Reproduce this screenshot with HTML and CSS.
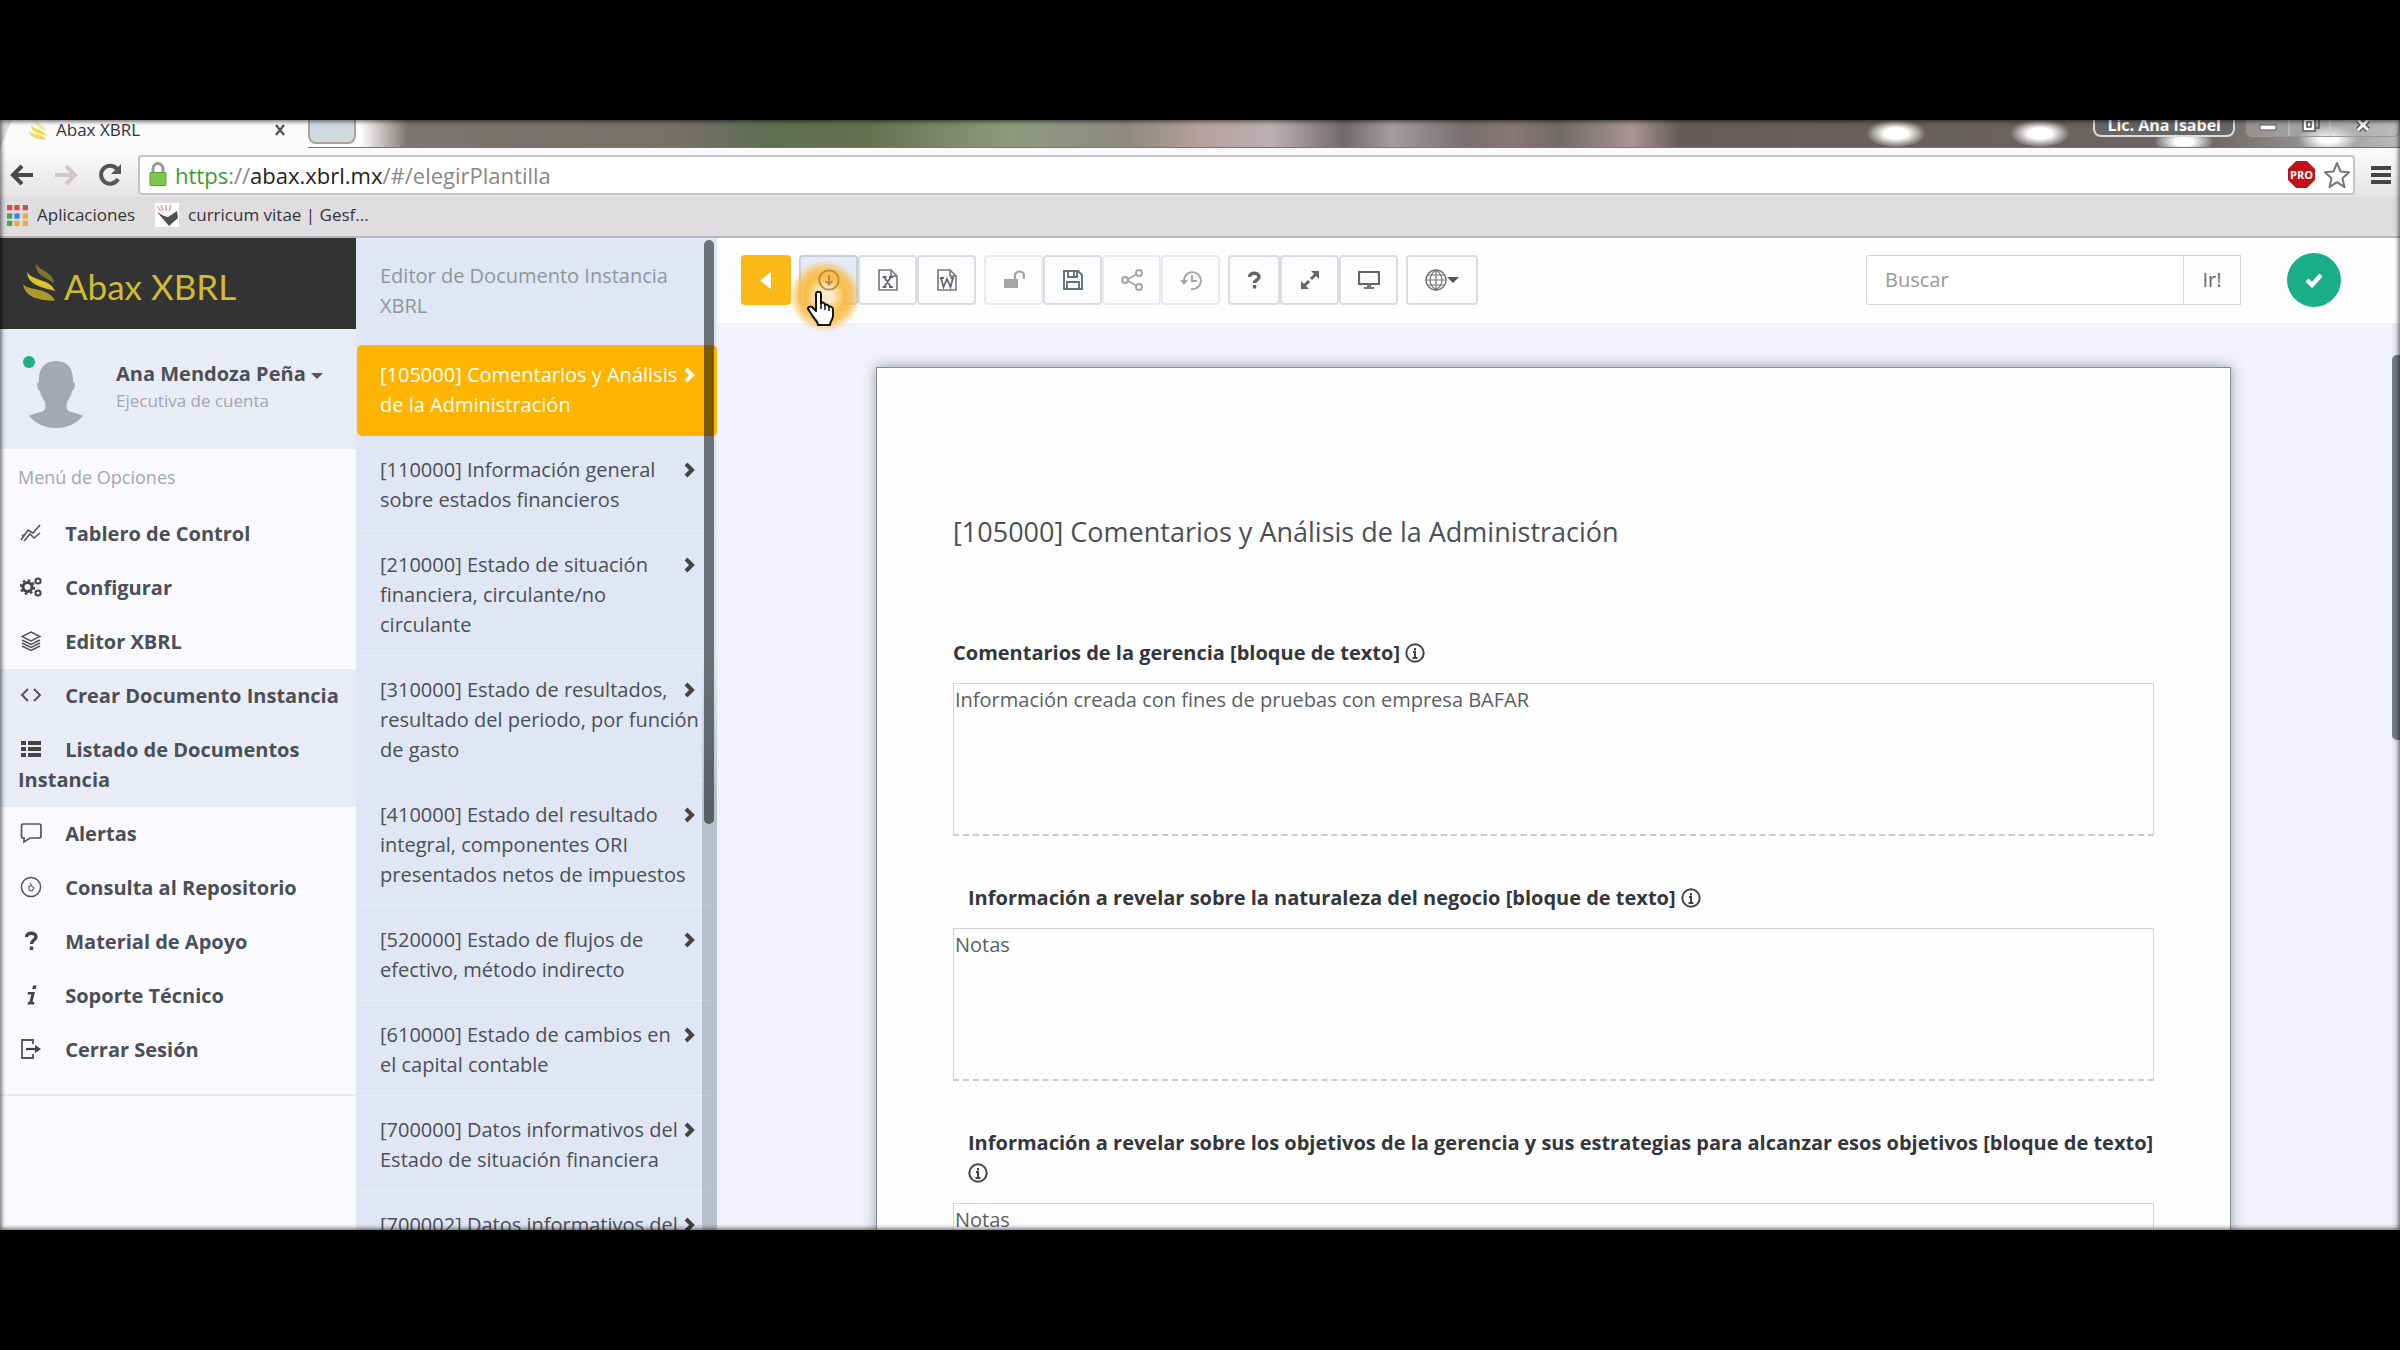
FILE: index.html
```html
<!DOCTYPE html>
<html lang="es">
<head>
    <meta charset="UTF-8">
    <meta name="viewport" content="width=device-width, initial-scale=1.0">
    <title>Abax XBRL</title>
    <link rel="stylesheet" href="styles.css">
</head>
<body>
<div class="screen">

    <!-- Browser -->
    <div class="tabs">
        <div class="tab">
            <svg class="favicon" viewBox="0 0 32 36"><path d="M10 0c2 7 20 8 20 20C20 14 10 12 10 0z" fill="#f3e9a0"/><path d="M3 9c5 9 24 7 28 19C18 24 4 23 3 9z" fill="#f5d93c"/><path d="M0 20c5 7 26 4 31 16C16 35 1 33 0 20z" fill="#eedb6a"/></svg>
            <span>Abax XBRL</span>
            <svg class="tab-close" viewBox="0 0 12 12"><path d="M2 1l8 10M10 1L2 11" stroke="#555" stroke-width="2.4"/></svg>
        </div>
        <div class="new-tab"></div>
        <div class="window-user">Lic. Ana Isabel</div>
        <div class="window-buttons">
            <svg viewBox="0 0 152 20"><path d="M42 0v20M83 0v20" stroke="#ccc" stroke-width="1"/><path d="M13 5h16v5H13z" fill="#fff" stroke="#555"/><path d="M56 -2h12v13H56zM60 2h4v5h-4z" fill="#fff" stroke="#555" stroke-width="1.5"/><path d="M68 -3h4v11h-3" fill="none" stroke="#555" stroke-width="1.5"/><path d="M111 0l10 10M121 0l-10 10" stroke="#555" stroke-width="6"/><path d="M111 0l10 10M121 0l-10 10" stroke="#fff" stroke-width="3"/></svg>
        </div>
    </div>
    <div class="navbar">
        <svg class="nav-icon" viewBox="0 0 24 24"><path d="M23 12H4M12 3l-9 9 9 9" fill="none" stroke="#484848" stroke-width="4"/></svg>
        <svg class="nav-icon" viewBox="0 0 24 24"><path d="M1 12h19M12 3l9 9-9 9" fill="none" stroke="#ccc8cc" stroke-width="4"/></svg>
        <svg class="nav-icon" viewBox="0 0 24 24"><path d="M20 16a9 9 0 1 1-1-10" fill="none" stroke="#555" stroke-width="4"/><path d="M23 1v10H13z" fill="#555"/></svg>
        <div class="omnibox">
            <svg class="lock" viewBox="0 0 18 24"><path d="M4 12V6a5 5 0 0 1 10 0v6" fill="none" stroke="#999" stroke-width="3"/><rect x="1" y="10" width="16" height="13" rx="1" fill="#7cc74c" stroke="#5a9a3a"/></svg>
            <div class="url"><span class="secure">https</span>://<span class="host">abax.xbrl.mx</span>/#/elegirPlantilla</div>
            <span class="pro">PRO</span>
            <svg class="star" viewBox="0 0 28 28"><path d="M14 2l3.500 8.500 8.500.7-6.500 6 2 9-7.500-5-7.500 5 2-9-6.500-6 8.500-.7z" fill="#fff" stroke="#777" stroke-width="2" stroke-linejoin="round"/></svg>
        </div>
        <svg class="burger" viewBox="0 0 20 20"><path d="M1 3h18M1 10h18M1 17h18" stroke="#444" stroke-width="4" stroke-linecap="round"/></svg>
    </div>
    <div class="bookmarks">
        <a href="#"><svg class="apps" viewBox="0 0 20 20"><path d="M0 0h5v5H0zM7 0h5v5H7zM15 0h5v5h-5z" fill="#d8484a"/><path d="M0 8h5v5H0z" fill="#3fa35a"/><path d="M7 8h5v5H7z" fill="#3a86d8"/><path d="M15 8h5v5h-5z" fill="#e8ac3a"/><path d="M0 15h5v5H0z" fill="#3fa35a"/><path d="M7 15h5v5H7zM15 15h5v5h-5z" fill="#e8ac3a"/></svg>Aplicaciones</a>
        <a href="#"><svg class="cv" viewBox="0 0 24 24"><path d="M0 0h24v24H0z" fill="#fff"/><path d="M2 3l4 5M6 2l2 6M11 2v6M16 2l-2 6" stroke="#e08a9a" stroke-width="1.200"/><path d="M2 9l7 4 4 1 9-6 1 7-9 8z" fill="#505054"/></svg>curricum vitae | Gesf...</a>
    </div>

    <div class="app">
        <!-- Main menu -->
        <aside class="sidebar">
            <div class="brand">
                <svg viewBox="0 0 32 38"><path d="M13 0c2 8 17 8 18 20C22 14 12 12 13 0z" fill="#7d752f"/><path d="M4 9c5 9 24 7 28 19C18 24 5 22 4 9z" fill="#d9c12f"/><path d="M0 21c5 7 26 3 32 17C17 37 2 35 0 21z" fill="#aa9b30"/></svg>
                <span>Abax XBRL</span>
            </div>
            <div class="profile">
                <div class="avatar">
                    <svg viewBox="0 0 70 70"><path d="M35 1c12 0 18 9 17 21 3 0 2 8-1 9-1 5-3 8-5 11-1 7 0 9 4 10 5 1 9 2 12 4-7 8-16 12-27 12S15 64 8 56c3-2 7-3 12-4 4-1 5-3 4-10-2-3-4-6-5-11-3-1-4-9-1-9C17 10 23 1 35 1z" fill="#a5a8b0"/></svg>
                    <span class="status"></span>
                </div>
                <div>
                    <div class="user-name">Ana Mendoza Peña <span class="caret"></span></div>
                    <div class="user-role">Ejecutiva de cuenta</div>
                </div>
            </div>
            <div class="menu-title">Menú de Opciones</div>
            <nav class="menu">
                <a href="#"><svg viewBox="0 0 22 22"><path d="M1 18L8 8l5 3 7-8M2 14l2-1M4 19l6-7 4 4 6-5" fill="none" stroke="#555" stroke-width="1.600"/></svg> Tablero de Control</a>
                <a href="#"><svg viewBox="0 0 22 22"><circle cx="7.500" cy="11" r="4.500" fill="none" stroke="#444" stroke-width="3"/><circle cx="7.500" cy="11" r="6.800" fill="none" stroke="#444" stroke-width="2" stroke-dasharray="2.700 2.640"/><circle cx="18" cy="5" r="2.600" fill="none" stroke="#444" stroke-width="2"/><circle cx="18" cy="17" r="2.600" fill="none" stroke="#444" stroke-width="2"/></svg> Configurar</a>
                <a href="#"><svg viewBox="0 0 22 22"><path d="M11 2l9 4.500-9 4.500-9-4.500zM2 10l9 4.500 9-4.500M2 13l9 4.500 9-4.500M2 16l9 4.500 9-4.500" fill="none" stroke="#555" stroke-width="1.400"/></svg> Editor XBRL</a>
                <div class="submenu">
                    <a href="#"><svg viewBox="0 0 22 22"><path d="M8 5l-6 6 6 6M14 5l6 6-6 6" fill="none" stroke="#555" stroke-width="2"/></svg> Crear Documento Instancia</a>
                    <a href="#"><svg viewBox="0 0 22 22"><path d="M1 3h5v4H1zM8 3h13v4H8zM1 9h5v4H1zM8 9h13v4H8zM1 15h5v4H1zM8 15h13v4H8z" fill="#444"/></svg> Listado de Documentos Instancia</a>
                </div>
                <a href="#"><svg viewBox="0 0 22 22"><path d="M3 2h16q2 0 2 2v10q0 2-2 2h-9l-6 4v-4H3q-1.500 0-1.500-2V4Q1.500 2 3 2z" fill="none" stroke="#555" stroke-width="1.700"/></svg> Alertas</a>
                <a href="#"><svg viewBox="0 0 22 22"><circle cx="11" cy="11" r="9.600" fill="none" stroke="#555" stroke-width="1.500"/><path d="M10 7l2 3M9 10v4l3 1 2-3-2-2z" fill="none" stroke="#666" stroke-width="1.200"/></svg> Consulta al Repositorio</a>
                <a href="#"><svg viewBox="0 0 22 22"><path d="M6.500 7c0-5 9.500-5 9.500 0 0 3.500-4.500 3-4.500 7M11.500 16.500v3.500" fill="none" stroke="#444" stroke-width="3.400"/></svg> Material de Apoyo</a>
                <a href="#"><svg viewBox="0 0 22 22"><path d="M13 1.500h3.500l-.7 3.500h-3.500zM8 8h7l-2.500 10h2l-.5 2.500H7.500L8 18h1.500l1.700-7.500H7.500z" fill="#444"/></svg> Soporte Técnico</a>
                <a href="#"><svg viewBox="0 0 22 22"><path d="M13 6V2H2v18h11v-4" fill="none" stroke="#555" stroke-width="1.800"/><path d="M6 11h10" stroke="#444" stroke-width="2.200"/><path d="M15 7l6 4-6 4z" fill="#444"/></svg> Cerrar Sesión</a>
            </nav>
        </aside>

        <!-- Document sections -->
        <aside class="sections">
            <h2>Editor de Documento Instancia XBRL</h2>
            <nav>
                <a class="active" href="#"><svg viewBox="0 0 12 16"><path d="M2 2l6 6-6 6"/></svg>[105000] Comentarios y Análisis de la Administración</a>
                <a href="#"><svg viewBox="0 0 12 16"><path d="M2 2l6 6-6 6"/></svg>[110000] Información general sobre estados financieros</a>
                <a href="#"><svg viewBox="0 0 12 16"><path d="M2 2l6 6-6 6"/></svg>[210000] Estado de situación financiera, circulante/no circulante</a>
                <a href="#"><svg viewBox="0 0 12 16"><path d="M2 2l6 6-6 6"/></svg>[310000] Estado de resultados, resultado del periodo, por función de gasto</a>
                <a href="#"><svg viewBox="0 0 12 16"><path d="M2 2l6 6-6 6"/></svg>[410000] Estado del resultado integral, componentes ORI presentados netos de impuestos</a>
                <a href="#"><svg viewBox="0 0 12 16"><path d="M2 2l6 6-6 6"/></svg>[520000] Estado de flujos de efectivo, método indirecto</a>
                <a href="#"><svg viewBox="0 0 12 16"><path d="M2 2l6 6-6 6"/></svg>[610000] Estado de cambios en el capital contable</a>
                <a href="#"><svg viewBox="0 0 12 16"><path d="M2 2l6 6-6 6"/></svg>[700000] Datos informativos del Estado de situación financiera</a>
                <a href="#"><svg viewBox="0 0 12 16"><path d="M2 2l6 6-6 6"/></svg>[700002] Datos informativos del</a>
            </nav>
            <div class="scroll-track"><div class="scroll-thumb"></div></div>
        </aside>

        <main class="main">
            <header class="toolbar">
                <button type="button" class="btn btn-back" aria-label="Regresar"><svg viewBox="0 0 22 22"><path d="M16 3v17L5 11.500z" fill="#fff"/></svg></button>
                <div class="btn-group">
                    <button type="button" class="btn btn-wide hover" aria-label="Importar">
                        <span class="click-glow"></span>
                        <svg viewBox="0 0 22 22"><circle cx="11" cy="11" r="9.700" fill="none" stroke="#b98a3c" stroke-width="1.800"/><path d="M11 6v9M7.500 12l3.500 3.500 3.500-3.500" fill="none" stroke="#b98a3c" stroke-width="1.800"/></svg>
                        <svg class="pointer" viewBox="0 0 28 36"><path d="M9 3c0-3 5-3 5 0v9c2-1 4 0 4 2 2-1 4 0 4 2 2-1 4 0 4 3v6c0 4-3 5-3 9H11c0-4-4-6-6-10l-4-6c0-3 4-3 5-1l3 3z" fill="#fff" stroke="#111" stroke-width="2" stroke-linejoin="round"/><path d="M14 12v6M18 14v5M22 16v4" stroke="#111" stroke-width="1.500"/></svg>
                    </button>
                    <button type="button" class="btn btn-wide" aria-label="Excel"><svg viewBox="0 0 22 22"><path d="M2 1h12l6 6v14H2zM14 1v6h6" fill="none" stroke="#777" stroke-width="1.600"/><path d="M7 8l7 10M14 8L7 18M5.500 8h4M12 8h4M5.500 18h4M12 18h4" stroke="#667" stroke-width="1.800"/></svg></button>
                    <button type="button" class="btn btn-wide" aria-label="Word"><svg viewBox="0 0 22 22"><path d="M2 1h12l6 6v14H2zM14 1v6h6" fill="none" stroke="#777" stroke-width="1.600"/><path d="M5 9l2.500 9L11 10l3.500 8L17 9M4 9h4M14.500 9H18" fill="none" stroke="#667" stroke-width="1.800"/></svg></button>
                </div>
                <div class="btn-group">
                    <button type="button" class="btn btn-wide" disabled aria-label="Desbloquear"><svg viewBox="0 0 22 22"><path d="M1 10h14v9H1z" fill="#777"/><path d="M12 10V7c0-6 9-6 9 0v3" fill="none" stroke="#777" stroke-width="2.200"/></svg></button>
                    <button type="button" class="btn btn-wide" aria-label="Guardar"><svg viewBox="0 0 22 22"><path d="M2 2h14l4 4v14H2zM6 2v6h9V2M5 20v-7h12v7M12 3v4" fill="none" stroke="#667077" stroke-width="1.900"/></svg></button>
                    <button type="button" class="btn btn-wide" disabled aria-label="Compartir"><svg viewBox="0 0 22 22"><path d="M7 10l9-5M7 12l9 5" stroke="#777" stroke-width="2"/><circle cx="4" cy="11" r="3" fill="none" stroke="#777" stroke-width="2"/><circle cx="18" cy="4" r="3" fill="none" stroke="#777" stroke-width="2"/><circle cx="18" cy="18" r="3" fill="none" stroke="#777" stroke-width="2"/></svg></button>
                    <button type="button" class="btn btn-wide" disabled aria-label="Historial"><svg viewBox="0 0 22 22"><path d="M4 13a8.500 8.500 0 1 1 7 7M12 6v6h5" fill="none" stroke="#777" stroke-width="1.900"/><path d="M0 11h8l-4 5z" fill="#777"/></svg></button>
                </div>
                <div class="btn-group">
                    <button type="button" class="btn" aria-label="Ayuda"><svg viewBox="0 0 22 22"><path d="M6.500 8c0-5 9.500-5 9.500 0 0 3-4.500 3-4.500 6M11.500 16v3.500" fill="none" stroke="#666" stroke-width="3.400"/></svg></button>
                    <button type="button" class="btn btn-wide" aria-label="Pantalla completa"><svg viewBox="0 0 22 22"><path d="M12 2h8v8zM2 12v8h8z" fill="#666"/><path d="M17 5l-5 5M5 17l5-5" stroke="#666" stroke-width="3"/></svg></button>
                    <button type="button" class="btn btn-wide" aria-label="Presentación"><svg viewBox="0 0 22 22"><path d="M1 3h20v12H1z" fill="none" stroke="#666" stroke-width="2.200"/><path d="M9 15h4v3h3v2H6v-2h3z" fill="#777"/></svg></button>
                </div>
                <button type="button" class="btn btn-globe" aria-label="Idioma"><svg viewBox="0 0 22 22"><circle cx="11" cy="11" r="10" fill="none" stroke="#777" stroke-width="1.500"/><path d="M11 1v20M1 11h20M3 6h16M3 16h16M11 1c-8 6-8 14 0 20 8-6 8-14 0-20" fill="none" stroke="#777" stroke-width="1.200"/></svg><span class="caret"></span></button>
                <div class="search">
                    <input type="text" placeholder="Buscar" aria-label="Buscar">
                    <button type="button">Ir!</button>
                </div>
                <div class="ok-badge"><svg viewBox="0 0 22 22"><path d="M4 11l5 5 9-10" fill="none" stroke="#fff" stroke-width="4.500"/></svg></div>
            </header>

            <div class="workspace">
                <div class="paper">
                    <h1>[105000] Comentarios y Análisis de la Administración</h1>
                    <div class="form-group">
                        <label for="comentarios">Comentarios de la gerencia [bloque de texto] <svg viewBox="0 0 20 20"><circle cx="10" cy="10" r="8.700"/><path d="M10 5v2.500M8 9h2v6M7.500 15h5"/></svg></label>
                        <textarea id="comentarios">Información creada con fines de pruebas con empresa BAFAR</textarea>
                    </div>
                    <div class="form-group nested">
                        <label for="naturaleza">Información a revelar sobre la naturaleza del negocio [bloque de texto] <svg viewBox="0 0 20 20"><circle cx="10" cy="10" r="8.700"/><path d="M10 5v2.500M8 9h2v6M7.500 15h5"/></svg></label>
                        <textarea id="naturaleza">Notas</textarea>
                    </div>
                    <div class="form-group nested">
                        <label for="objetivos">Información a revelar sobre los objetivos de la gerencia y sus estrategias para alcanzar esos objetivos [bloque de texto] <svg viewBox="0 0 20 20"><circle cx="10" cy="10" r="8.700"/><path d="M10 5v2.500M8 9h2v6M7.500 15h5"/></svg></label>
                        <textarea id="objetivos">Notas</textarea>
                    </div>
                </div>
                <div class="page-scroll"><div class="page-thumb"></div></div>
            </div>
        </main>
    </div>
</div>
</body>
</html>
```
FILE: styles.css
```css
* {
    box-sizing: border-box;
}
body {
    margin: 0;
    height: 100vh;
    padding: 120px 0;
    background: #000;
    font-family: "Open Sans", "Noto Sans", sans-serif;
    font-size: 20px;
    line-height: 30px;
    color: #4b4f56;
    overflow: hidden;
}
a {
    color: inherit;
    text-decoration: none;
}
svg {
    display: block;
    flex: none;
}
.screen {
    position: relative;
    height: 100%;
    display: flex;
    flex-direction: column;
    overflow: hidden;
}
/* dark rim round the whole window */
.screen::after {
    content: "";
    position: absolute;
    inset: 0;
    box-shadow: inset 0 0 5px 1px rgba(0, 0, 0, 0.7);
    pointer-events: none;
}

/* Browser */
.tabs {
    flex: none;
    height: 28px;
    display: flex;
    align-items: flex-start;
    background:
        radial-gradient(ellipse 30px 14px at 79% 50%, #fff 40%, transparent),
        radial-gradient(ellipse 30px 14px at 85% 50%, #fff 40%, transparent),
        radial-gradient(ellipse 30px 14px at 91% 80%, #fff 30%, transparent),
        radial-gradient(ellipse 30px 14px at 97% 70%, #fff 30%, transparent),
        linear-gradient(90deg, #ddd 0, #fff 14%, #fff 15%, #7a7470 17%, #77716c 28%, #5f6d50 32%, #66704f 36%, #8f9a7c 42%, #8d8a82 47%, #b79fa0 50%, #bcb0b2 53%, #6f6a6c 56%, #a39da0 58%, #77706f 61%, #8a7676 63%, #6f6b69 65%, #aa9496 68%, #645c58 70%, #6b6664 92%, #bbb 100%);
    border-bottom: 1px solid #777;
    font-size: 17px;
    line-height: 20px;
}
.tab {
    width: 308px;
    height: 28px;
    padding: 0 22px 8px 28px;
    display: flex;
    align-items: center;
    gap: 8px;
    color: #333;
    background: #fbfafc;
    clip-path: polygon(12px 0, 296px 0, 308px 100%, 0 100%);
}
.favicon {
    width: 20px;
    height: 20px;
}
.tab-close {
    width: 12px;
    height: 12px;
    margin-left: auto;
}
.new-tab {
    width: 48px;
    height: 24px;
    border: 2px solid #a5a694;
    border-top: 0;
    border-radius: 0 0 8px 8px;
    background: #d3dadf;
}
.window-user {
    margin-left: auto;
    padding: 0 12px;
    height: 17px;
    border: 2px solid #ddd;
    border-top: 0;
    border-radius: 0 0 8px 8px;
    background: #666;
    color: #fff;
    font-size: 16px;
    font-weight: bold;
    line-height: 10px;
}
.window-buttons {
    width: 154px;
    height: 17px;
    margin-left: 11px;
    border: 1px solid #999;
    border-top: 0;
    border-radius: 0 0 6px 6px;
    background: rgba(190, 188, 190, 0.4);
    overflow: hidden;
}
.navbar {
    flex: none;
    height: 49px;
    padding: 4px 9px 0 10px;
    display: flex;
    align-items: center;
    gap: 20px;
    background: linear-gradient(#fcfbfd, #e6e3e7);
}
.nav-icon {
    width: 24px;
    height: 24px;
}
.omnibox {
    flex: 1;
    height: 40px;
    margin: 0 -4px;
    padding: 0 2px 0 9px;
    display: flex;
    align-items: center;
    gap: 8px;
    border: 2px solid #c6c3c8;
    border-radius: 4px;
    background: #fff;
}
.lock {
    width: 18px;
    height: 25px;
}
.url {
    flex: 1;
    font-size: 22px;
    color: #888;
}
.secure {
    color: #3a9a35;
}
.host {
    color: #222;
}
.pro {
    width: 27px;
    line-height: 27px;
    font-size: 11px;
    font-weight: bold;
    text-align: center;
    color: #fff;
    background: #c1121c;
    clip-path: polygon(30% 0, 70% 0, 100% 30%, 100% 70%, 70% 100%, 30% 100%, 0 70%, 0 30%);
}
.star {
    width: 28px;
    height: 28px;
}
.burger {
    width: 20px;
    height: 20px;
}
.bookmarks {
    flex: none;
    height: 41px;
    padding: 0 0 3px 7px;
    display: flex;
    align-items: center;
    gap: 20px;
    border-bottom: 2px solid #b9b6bb;
    background: #e0dde1;
    color: #333;
    font-size: 17px;
}
.bookmarks a {
    display: flex;
    align-items: center;
    gap: 9px;
}
.apps {
    width: 21px;
    height: 21px;
}
.cv {
    width: 24px;
    height: 24px;
}

.app {
    flex: 1;
    min-height: 0;
    display: flex;
}

/* Main menu */
.sidebar {
    flex: none;
    width: 356px;
    background: #f9f9fe;
}
.brand {
    height: 91px;
    padding: 4px 0 0 23px;
    display: flex;
    align-items: center;
    gap: 9px;
    background: #333;
    color: #d1bb32;
    font-family: Lato, sans-serif;
    font-size: 35px;
    line-height: 40px;
}
.brand svg {
    width: 32px;
    height: 38px;
    margin-bottom: 8px;
}
.profile {
    height: 120px;
    padding: 25px 0 0 16px;
    display: flex;
    gap: 20px;
    background: #e9ecf6;
}
.profile > div:last-child {
    padding-top: 6px;
}
.avatar {
    position: relative;
    width: 80px;
    height: 80px;
    padding: 6px 5px;
}
.status {
    position: absolute;
    left: 7px;
    top: 2px;
    width: 12px;
    height: 12px;
    border-radius: 50%;
    background: #1ab082;
}
.user-name {
    font-weight: bold;
    line-height: 28px;
}
.caret {
    display: inline-block;
    vertical-align: middle;
    border: 6px solid transparent;
    border-top-color: #555;
    border-bottom: 0;
}
.user-role {
    font-size: 17px;
    line-height: 26px;
    color: #a2a6ae;
}
.menu-title {
    padding: 13px 18px 15px;
    font-size: 18px;
    color: #a5a8ad;
}
.menu {
    padding-bottom: 17px;
    border-bottom: 2px solid #e9ebf2;
    font-weight: bold;
}
.menu a {
    display: block;
    padding: 12px 10px 12px 18px;
}
.menu svg {
    display: inline-block;
    width: 22px;
    height: 22px;
    margin: 0 18px 0 2px;
    vertical-align: -3px;
}
.submenu {
    background: #e9ecf6;
}

/* Document sections */
.sections {
    position: relative;
    flex: none;
    width: 361px;
    padding-left: 1px;
    background: #e0e6f3;
    overflow: hidden;
}
.sections h2 {
    margin: 0;
    padding: 23px 40px 24px 23px;
    font-size: 20px;
    font-weight: normal;
    color: #8f959f;
}
.sections nav {
    display: flex;
    flex-direction: column;
    gap: 4px;
}
.sections nav a {
    display: block;
    padding: 15px 15px 15px 23px;
    border-bottom: 1px solid #eaeef8;
}
.sections nav svg {
    float: right;
    width: 12px;
    height: 16px;
    margin: 7px 6px 0 0;
}
.sections nav path {
    fill: none;
    stroke: #444;
    stroke-width: 4;
}
.sections nav a.active {
    border-radius: 5px;
    border-color: #ffb400;
    background: #ffb400;
    color: #fff;
}
.sections nav a.active path {
    stroke: #fff;
}
.scroll-track {
    position: absolute;
    top: 2px;
    right: 0;
    bottom: 0;
    width: 15px;
    padding: 0 3px 0 2px;
    background: linear-gradient(transparent 42%, rgba(0, 20, 30, 0.18) 57%);
}
.scroll-thumb {
    height: 59%;
    border-radius: 5px;
    background: rgba(0, 5, 10, 0.52);
}

/* Workspace */
.main {
    flex: 1;
    min-width: 0;
    display: flex;
    flex-direction: column;
}
.toolbar {
    flex: none;
    height: 85px;
    padding: 0 59px 2px 24px;
    display: flex;
    align-items: center;
    gap: 8px;
    background: #fefeff;
}
.btn-group {
    display: flex;
}
.btn {
    position: relative;
    width: 52px;
    height: 50px;
    padding: 0;
    display: flex;
    align-items: center;
    justify-content: center;
    border: 2px solid #dadce4;
    border-radius: 4px;
    background: #fdfdff;
}
.btn svg {
    width: 22px;
    height: 22px;
}
.btn-wide {
    width: 59px;
}
.btn-globe {
    width: 72px;
}
.btn-back {
    width: 50px;
    border-color: #fab916;
    background: #fab916;
}
.btn:disabled {
    border-color: #e9ebf0;
}
.btn:disabled svg {
    opacity: 0.65;
}
.btn.hover {
    border-color: #c9cedb;
    background: #e6eaf4;
}
/* click highlight and mouse pointer lie over the button */
.click-glow {
    position: absolute;
    left: -12px;
    top: 3px;
    width: 72px;
    height: 72px;
    border-radius: 50%;
    background: radial-gradient(closest-side, rgba(255, 235, 195, 0.8) 20%, rgba(252, 184, 50, 0.9) 55%, rgba(250, 185, 60, 0.75) 75%, rgba(255, 190, 60, 0));
}
.hover svg {
    position: relative;
    z-index: 1;
}
.btn .pointer {
    position: absolute;
    z-index: 2;
    left: 6px;
    top: 34px;
    width: 28px;
    height: 36px;
}
.search {
    width: 375px;
    height: 50px;
    margin-left: auto;
    display: flex;
}
.search input {
    flex: 1;
    min-width: 0;
    padding: 0 18px;
    border: 1px solid #d3d6dd;
    border-radius: 3px 0 0 3px;
    background: #fff;
    font: inherit;
}
.search input::placeholder {
    color: #999;
    opacity: 1;
}
.search button {
    width: 58px;
    margin-left: -1px;
    border: 1px solid #d3d6dd;
    background: #fdfdff;
    color: #666;
    font: inherit;
}
.ok-badge {
    width: 54px;
    height: 54px;
    margin-left: 38px;
    display: flex;
    align-items: center;
    justify-content: center;
    border-radius: 50%;
    background: #1aae88;
}
.ok-badge svg {
    width: 22px;
    height: 22px;
}
.workspace {
    flex: 1;
    min-height: 0;
    display: flex;
    background: #f1f2fb;
    overflow: hidden;
}
.paper {
    flex: 1;
    align-self: flex-start;
    margin: 44px 161px 0 159px;
    padding: 144px 76px 0;
    border: 1px solid #868b93;
    background: #fefeff;
    box-shadow: 0 0 12px rgba(60, 70, 90, 0.5);
}
.paper h1 {
    margin: 0 0 86px;
    font-size: 27px;
    font-weight: normal;
    line-height: 40px;
}
.form-group {
    margin-bottom: 47px;
}
.form-group label {
    display: block;
    margin-bottom: 15px;
    color: #33373d;
    font-weight: bold;
}
.nested label {
    padding-left: 15px;
}
.form-group label svg {
    display: inline-block;
    width: 20px;
    height: 20px;
    vertical-align: -3px;
    fill: none;
    stroke: #444;
    stroke-width: 2;
}
.form-group textarea {
    display: block;
    width: 100%;
    height: 153px;
    padding: 1px;
    border: 1px solid #d3d5db;
    border-bottom: 2px dashed #c9cbd2;
    background: #fefeff;
    color: #5b5f66;
    font: inherit;
    resize: none;
}
.page-scroll {
    width: 8px;
    padding-top: 32px;
    background: #e9eaf2;
}
.page-thumb {
    height: 44%;
    border-radius: 5px 0 0 5px;
    background: #777b85;
}
```
